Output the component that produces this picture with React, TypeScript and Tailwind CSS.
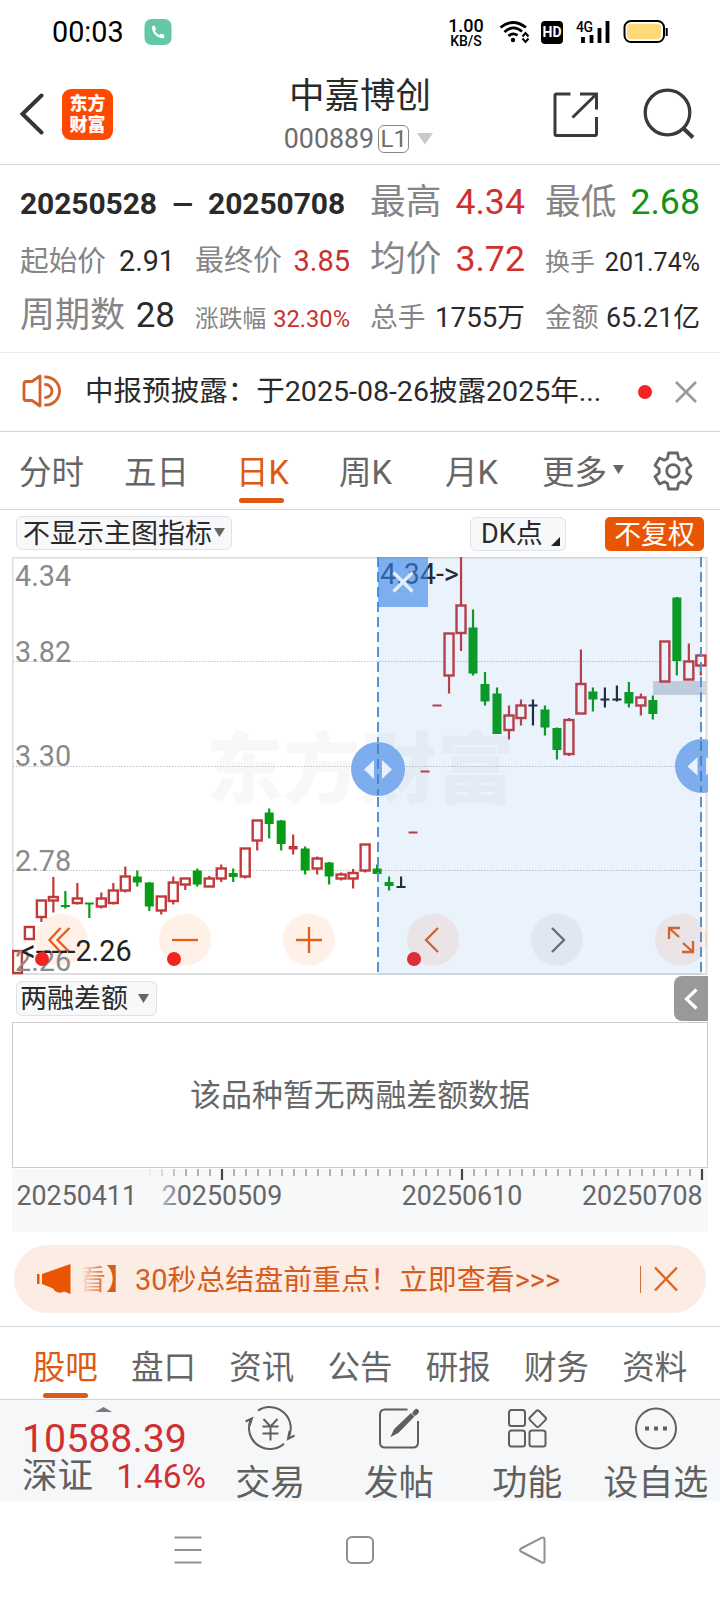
import { ReactNode } from 'react';
import clsx from 'clsx';

const ORANGE = '#e2601c';
const RED = '#c4383a';
const GREEN = '#079c16';
const DARK = '#1f2533';

type Kind = 'up' | 'down' | 'flat';
// [kind, high, bodyTop, bodyBottom, low]
type Candle = [Kind, number, number, number, number];

const candles: Candle[] = [
  ['up', 950, 950, 974, 974],
  ['up', 926, 926, 940, 940],
  ['up', 899.5, 899.5, 918, 922],
  ['up', 877, 896, 901.5, 912.5],
  ['down', 891, 905, 907, 908.5],
  ['up', 883, 897.5, 904, 904.5],
  ['down', 902.5, 902.5, 904.5, 918],
  ['up', 892.5, 897.5, 907.5, 908.5],
  ['up', 883, 889.5, 904, 904.5],
  ['up', 866.5, 875.5, 891.5, 892.5],
  ['down', 870.5, 876.5, 882.5, 886.5],
  ['down', 882, 882.5, 906.5, 911],
  ['up', 895.5, 895.5, 911.5, 914.5],
  ['up', 876.5, 881.5, 902, 904.5],
  ['up', 877.5, 877.5, 885.5, 890],
  ['down', 868.5, 870.5, 884.5, 886.5],
  ['up', 876, 877.5, 887.5, 887.5],
  ['up', 864.5, 867.5, 879.5, 882],
  ['down', 868.5, 873, 877, 882],
  ['up', 847.5, 847.5, 877.5, 878.5],
  ['up', 819.5, 819.5, 841.5, 850.5],
  ['down', 808.5, 812.5, 824, 838.5],
  ['down', 820, 820.5, 844, 850.5],
  ['up', 834.5, 846, 849.5, 854.5],
  ['down', 846.5, 848.5, 870.5, 874.5],
  ['up', 856.5, 857.5, 869.5, 874.5],
  ['down', 862, 862.5, 876.5, 884.5],
  ['up', 872.5, 873.5, 879.5, 880.5],
  ['up', 869, 872, 879.5, 888.5],
  ['up', 843.5, 843.5, 871.5, 872.5],
  ['down', 864.5, 868.5, 874, 874],
  ['down', 876.5, 882, 886, 890.5],
  ['flat', 876.5, 886, 888, 888],
  ['up', 831.5, 831.5, 833.5, 833.5],
  ['up', 770.5, 770.5, 772.5, 772.5],
  ['up', 704.5, 704.5, 706.5, 706.5],
  ['up', 632.5, 632.5, 676.5, 693.5],
  ['up', 557, 604.5, 634, 651],
  ['down', 609.5, 627.5, 673.5, 675.5],
  ['down', 672, 684, 701.5, 705.5],
  ['down', 687.5, 693.5, 734, 734],
  ['up', 705.5, 714.5, 731, 739.5],
  ['up', 699.5, 704.5, 719, 725.5],
  ['flat', 699.5, 704.5, 706.5, 725.5],
  ['down', 705.5, 709.5, 727.5, 735.5],
  ['down', 727.5, 728, 750, 759.5],
  ['up', 718, 719, 755, 756],
  ['up', 649.5, 683, 714.5, 714.5],
  ['down', 687.5, 691.5, 699.5, 711.5],
  ['flat', 687.5, 698.5, 700.5, 707.5],
  ['flat', 685.5, 698.5, 700.5, 701.5],
  ['down', 682, 692, 703.5, 707.5],
  ['up', 693.5, 696.5, 706.5, 715.5],
  ['down', 695.5, 700, 714, 719.5],
  ['up', 640.5, 640.5, 682.5, 682.5],
  ['down', 597, 597.5, 661, 675.5],
  ['up', 643.5, 660.5, 680.5, 680.5],
  ['up', 652, 654.5, 666.5, 675.5],
];

const periods = ['20250411', '20250509', '20250610', '20250708'];
const bottomTabs = ['股吧', '盘口', '资讯', '公告', '研报', '财务', '资料'];

export default function App() {
  return (
    <div className="w-[720px] h-[1600px] overflow-hidden bg-white text-[#2a2a2a] font-['Roboto','Noto_Sans_CJK_SC',sans-serif]">
      <StatusBar />
      <Header />
      <Stats />
      <Notice />
      <PeriodTabs />
      <ChartToolbar />
      <CandleChart />
      <Indicator />
      <TimeAxis />
      <Banner />
      <BottomTabs />
      <BottomBar />
      <SystemNav />
    </div>
  );
}

function StatusBar() {
  return (
    <div className="flex h-[62px] items-center pl-[52px] pr-[51px] pt-[2px] text-black">
      <span className="text-[28.800px] leading-none">00:03</span>
      <svg className="ml-[20px]" width="28" height="28" viewBox="0 0 28 28">
        <rect x="0.5" y="1" width="27" height="26" rx="7" fill="#64c8a7" />
        <path d="M8 8.300 10.600 7.600 12.200 11.200 10.800 12.600C11.700 14.600 13.200 16.200 15.300 17L16.800 15.600 20.400 17.100 20 20.200C13.500 20.700 7.600 15.200 8 8.300Z" fill="#fff" />
      </svg>
      <div className="ml-auto flex items-center">
        <div className="flex w-[36px] flex-col items-center font-medium">
          <span className="text-[18px] leading-[17px]">1.00</span>
          <span className="text-[14px] leading-[14px]">KB/S</span>
        </div>
        <svg className="ml-[15px]" width="32" height="26" viewBox="0 0 32 26" fill="none" stroke="#000" strokeWidth="2.800">
          <path d="M1.500 8.500Q14 -1.500 27 8.500M5.500 13Q14 5 23 12.500M9.500 17Q14 13 18.500 16.500" />
          <circle cx="14" cy="21" r="2.200" fill="#000" stroke="none" />
          <path d="M23.500 17.500 26.500 14 29.500 17.500M23.500 19.500 26.500 23 29.500 19.500" strokeWidth="2" />
        </svg>
        <span className="ml-[10px] flex h-[23px] w-[22px] items-center justify-center rounded-[4px] bg-black text-[14px] font-bold leading-none text-white">HD</span>
        <svg className="ml-[13px]" width="34" height="26" viewBox="0 0 34 26">
          <text x="0" y="12.500" fontSize="14" fontWeight="500" textLength="17">4G</text>
          <path d="M7 18v6M15.500 16v8M23.500 9v15M31.500 2v22" stroke="#000" strokeWidth="3.800" />
        </svg>
        <svg className="ml-[13px]" width="46" height="26" viewBox="0 0 46 26">
          <rect x="1.500" y="2" width="39.500" height="21" rx="6.500" fill="#fff" stroke="#000" strokeWidth="2" />
          <rect x="4" y="4.800" width="34" height="15.500" rx="4" fill="#fdd978" />
          <path d="M43.700 9v8" stroke="#000" strokeWidth="2" />
        </svg>
      </div>
    </div>
  );
}

function Header() {
  return (
    <header className="grid h-[103px] grid-cols-[1fr_auto_1fr] items-center border-b border-[#d5d5d5]">
      <div className="flex items-center pl-[19px] pt-[2px]">
        <svg width="26" height="42" viewBox="0 0 26 42" fill="none" stroke="#353535" strokeWidth="4" strokeLinecap="round">
          <path d="M22.500 2.500 3.500 21 22.500 39.500" />
        </svg>
        <div className="ml-[17px] flex h-[51px] w-[51px] flex-col items-center justify-center rounded-[9px] bg-[#ff4800] text-[18px] font-black leading-[21px] text-white">
          <span>东方</span>
          <span>财富</span>
        </div>
      </div>
      <div className="flex flex-col items-center pt-[3px]">
        <h1 className="text-[35.500px] leading-[42px]">中嘉博创</h1>
        <div className="mt-[7px] flex items-center pr-[3px] text-[26.800px] leading-[30px] text-[#6d6d6d]">
          000889
          <span className="ml-[4px] flex h-[28px] w-[31px] items-center justify-center rounded-[6px] border border-[#888] text-[24px]">L1</span>
          <svg className="ml-[8px]" width="16" height="12" viewBox="0 0 16 12"><path d="M0 0h16L8 11.500Z" fill="#c9c9c9" /></svg>
        </div>
      </div>
      <div className="flex items-center justify-end pr-[24px] pt-[1px]">
        <svg width="48" height="48" viewBox="0 0 48 48" fill="none" stroke="#3a3a3a" strokeWidth="3">
          <path d="M19.500 4H5.500Q4 4 4 5.500V44Q4 45.500 5.500 45.500H44Q45.500 45.500 45.500 44V27M29 4H45.500V19.500M45 4.500 21.500 27.500" />
        </svg>
        <svg className="ml-[43px]" width="54" height="54" viewBox="0 0 54 54" fill="none" stroke="#3a3a3a" strokeWidth="3.300">
          <circle cx="25.500" cy="25.500" r="22.300" />
          <path d="M41 41 51 50.500" strokeWidth="4" />
        </svg>
      </div>
    </header>
  );
}

interface StatProps {
  label: string;
  value: string;
  size: string;
  color?: string;
}

function Stat({ label, value, size, color }: StatProps) {
  return (
    <div className={clsx('flex items-baseline justify-between whitespace-nowrap', size)}>
      <span className="text-[#858585]">{label}</span>
      <span className={color}>{value}</span>
    </div>
  );
}

function Stats() {
  return (
    <section className="grid h-[188px] grid-cols-[155px_155px_155px_155px] grid-rows-[57px_57px_57px] items-baseline gap-x-[20px] border-b border-[#ececec] pl-[20px] pt-[11px] leading-[52px]">
      <div className="col-span-2 flex items-baseline justify-between pb-[3px] pr-[5px] text-[30px] font-bold leading-[49px] tracking-[-0.1px]">
        <span>20250528</span>
        <span className="text-[27px]">—</span>
        <span>20250708</span>
      </div>
      <Stat label="最高" value="4.34" size="text-[35.700px]" color="text-[#d0312f]" />
      <Stat label="最低" value="2.68" size="text-[35.700px]" color="text-[#119415]" />
      <Stat label="起始价" value="2.91" size="text-[28.700px]" />
      <Stat label="最终价" value="3.85" size="text-[29px]" color="text-[#c9302f]" />
      <Stat label="均价" value="3.72" size="text-[35.700px]" color="text-[#d0312f]" />
      <Stat label="换手" value="201.74%" size="text-[25px]" />
      <Stat label="周期数" value="28" size="text-[35px]" />
      <Stat label="涨跌幅" value="32.30%" size="text-[23.700px]" color="text-[#c9302f]" />
      <Stat label="总手" value="1755万" size="text-[27.700px]" />
      <Stat label="金额" value="65.21亿" size="text-[26.800px]" />
    </section>
  );
}

function Notice() {
  return (
    <div className="flex h-[79px] items-center border-b border-[#d5d5d5] pl-[22px]">
      <svg className="mb-[2px]" width="40" height="34" viewBox="0 0 40 34" fill="none" stroke="#d2622c" strokeWidth="2.800" strokeLinejoin="round" strokeLinecap="round">
        <path d="M18 2 10 7.500H4Q2 7.500 2 10V24Q2 26.500 4 26.500H10L18 32Z" />
        <path d="M23.500 10.500A6.500 6.500 0 0 1 23.500 23.500M23.500 3A14 14 0 0 1 23.500 31" />
      </svg>
      <span className="ml-[23px] whitespace-nowrap text-[28.550px]">中报预披露：于2025-08-26披露2025年...</span>
      <span className="ml-auto h-[14px] w-[14px] rounded-full bg-[#f22323]" />
      <svg className="ml-[22px] mr-[22px]" width="24" height="24" viewBox="0 0 24 24" stroke="#999" strokeWidth="2.600">
        <path d="M2 2 22 22M22 2 2 22" />
      </svg>
    </div>
  );
}

function PeriodTabs() {
  return (
    <nav className="flex h-[78px] items-center border-b border-[#d5d5d5] pl-[19px] pt-[4px] text-[32.500px] leading-[48px] text-[#666]">
      <span className="w-[105px]">分时</span>
      <span className="w-[112px]">五日</span>
      <span className="relative w-[103px] text-[#dc5a14]">
        日K
        <span className="absolute -bottom-[6px] left-[3px] h-[5px] w-[45px] rounded-full bg-[#dc5a14]" />
      </span>
      <span className="w-[106px]">周K</span>
      <span className="w-[97px]">月K</span>
      <span>更多</span>
      <svg className="ml-[6px] mb-[6px]" width="11" height="9" viewBox="0 0 11 9"><path d="M0 0h11L5.500 9Z" fill="#666" /></svg>
      <svg className="ml-[28px] mb-[4px]" width="42" height="42" viewBox="-21 -21 42 42" fill="none" stroke="#666" strokeWidth="2.800" strokeLinejoin="round">
        <path d="M-4.500 -18H4.500L5.500 -12.500 8.500 -10.800 13.500 -13 18 -5.500 13.800 -2V2L18 5.500 13.500 13 8.500 10.800 5.500 12.500 4.500 18H-4.500L-5.500 12.500 -8.500 10.800 -13.500 13 -18 5.500 -13.800 2V-2L-18 -5.500 -13.500 -13 -8.500 -10.800 -5.500 -12.500Z" />
        <circle r="6.300" />
      </svg>
    </nav>
  );
}

function ChartToolbar() {
  return (
    <div className="flex h-[47px] items-start pl-[16px] pr-[16px] pt-[6px] text-[27px] leading-[32px]">
      <div className="flex h-[34px] w-[216px] items-center justify-between whitespace-nowrap rounded-[6px] border border-[#e0e2e8] bg-[#f7f8fa] pl-[6px] pr-[6px] pt-px text-[27px]">
        不显示主图指标
        <svg className="mb-[3px]" width="11" height="9" viewBox="0 0 11 9"><path d="M0 0h11L5.500 9Z" fill="#666" /></svg>
      </div>
      <div className="ml-auto mt-px flex h-[34px] w-[96px] items-center justify-between rounded-[6px] border border-[#e0e2e8] bg-[#f7f8fa] pl-[10px] pr-[5px]">
        DK点
        <svg className="mt-[14px]" width="9" height="9" viewBox="0 0 9 9"><path d="M9 0V9H0Z" fill="#222" /></svg>
      </div>
      <div className="ml-[39px] mt-px flex h-[34px] w-[99px] items-center justify-center rounded-[5px] bg-[#e95504] pt-px text-[26.800px] text-white">不复权</div>
    </div>
  );
}

function CandleShape({ index, candle }: { index: number; candle: Candle }) {
  const [kind, high, top, bottom, low] = candle;
  const x = 17.4 + index * 11.99;
  const color = kind === 'up' ? RED : kind === 'down' ? GREEN : DARK;
  const hollow = kind === 'up' && bottom - top > 4;
  return (
    <g>
      {high < top && <path d={`M${x} ${high}V${top + 1}`} stroke={color} strokeWidth="2.200" />}
      {low > bottom && <path d={`M${x} ${bottom - 1}V${low}`} stroke={color} strokeWidth="2.200" />}
      {hollow ? (
        <rect x={x - 4.5} y={top + 1} width="9" height={bottom - top - 2} fill="#fff" stroke={color} strokeWidth="2.400" />
      ) : (
        <rect x={x - 4.5} y={top} width="9" height={bottom - top} fill={color} />
      )}
    </g>
  );
}

function RoundButton({ x, gray, children }: { x: number; gray?: boolean; children: ReactNode }) {
  return (
    <g>
      <circle cx={x} cy="939.700" r="26" fill={gray ? '#88898b' : '#ff6b1a'} fillOpacity="0.1" />
      <g transform={`translate(${x} 940)`} fill="none" stroke={gray ? '#6b6b6b' : ORANGE} strokeWidth="2.300">{children}</g>
    </g>
  );
}

function CandleChart() {
  return (
    <svg className="ml-[12px] block" width="696" height="418" viewBox="12 557 696 418">
      <path d="M12.500 975V557.500H706.500V974H12" fill="none" stroke="#dedede" strokeWidth="2" />
      <text x="206" y="797" fontSize="77" fontWeight="900" fill="#f8f8f8">东方财富</text>
      {[661.5, 766.5, 870.5].map(y => (
        <path key={y} d={`M13 ${y}H708`} stroke="#c4c4c4" strokeWidth="1" strokeDasharray="1.500 1.500" />
      ))}
      <g fontSize="28.800" fill="#8a8a8a">
        <text x="15" y="585.500">4.34</text>
        <text x="15" y="662">3.82</text>
        <text x="15" y="766">3.30</text>
        <text x="15" y="870.500">2.78</text>
      </g>
      <rect x="653" y="681" width="54" height="14" fill="#d0d5de" />
      {candles.map((c, i) => <CandleShape key={i} index={i} candle={c} />)}
      <text x="380" y="583.500" fontSize="28.700" fill="#222">4.34-&gt;</text>

      <RoundButton x={61.5}>
        <path d="M-1 -12 -12 0 -1 12M8 -12 -4 0 8 12" />
      </RoundButton>
      <RoundButton x={185}><path d="M-13 0H13" /></RoundButton>
      <RoundButton x={309}><path d="M-13 0H13M0 -13V13" /></RoundButton>
      <RoundButton x={433}><path d="M5 -12 -7 0 5 12" /></RoundButton>
      <RoundButton x={557} gray><path d="M-5 -12 7 0 -5 12" /></RoundButton>
      <RoundButton x={681}>
        <path d="M-12 -1V-12H-1M-12 -12 -2 -3M12 1V12H1M12 12 2 3" />
      </RoundButton>
      <text x="15" y="970.500" fontSize="28.800" fill="#8a8a8a">2.26</text>
      <text x="21" y="961" fontSize="28.800" fill="#222">&lt;-----2.26</text>
      {[42, 174, 414].map(x => <circle key={x} cx={x} cy="959" r="7" fill="#f02522" />)}

      {/* selected range */}
      <rect x="378" y="557" width="324" height="418" fill="#2f80dc" fillOpacity="0.1" />
      <path d="M378 557V975M701 557V975" stroke="#5b92cd" strokeWidth="2" strokeDasharray="10 5" />
      <rect x="378" y="557" width="50" height="50" fill="#3a86e6" fillOpacity="0.620" />
      <path d="M393.500 572.500 412.500 591.500M412.500 572.500 393.500 591.500" stroke="#e3eefc" strokeWidth="3.200" />
      <circle cx="378" cy="769" r="27" fill="#7dadec" />
      <path d="M378 744V795" stroke="#4a87c8" strokeWidth="2" strokeDasharray="10 5" />
      <path d="M374 760V779L364 769.500ZM382 760V779L392 769.500Z" fill="#e8f1fc" />
      <circle cx="702" cy="766" r="27" fill="#7dadec" />
      <path d="M701 741V792" stroke="#4a87c8" strokeWidth="2" strokeDasharray="10 5" />
      <path d="M697.500 757V775.500L687.500 766.500ZM706 757V775.500L716 766.500Z" fill="#e8f1fc" />
    </svg>
  );
}

function Indicator() {
  return (
    <section className="px-[12px]">
      <div className="flex h-[47px] justify-between">
        <div className="ml-[4px] mt-[6px] flex h-[35px] w-[141px] items-center justify-between rounded-[6px] border border-[#e0e2e8] bg-[#f7f8fa] pl-[3px] pr-[7px] text-[27px] leading-[32px]">
          两融差额
          <svg width="11" height="9" viewBox="0 0 11 9"><path d="M0 0h11L5.500 9Z" fill="#666" /></svg>
        </div>
        <div className="mt-px flex h-[45px] w-[34px] items-center justify-center rounded-l-[8px] bg-[#999]">
          <svg width="14" height="22" viewBox="0 0 14 22" fill="none" stroke="#fff" strokeWidth="3.200">
            <path d="M12.500 1.500 2.500 11 12.500 20.500" />
          </svg>
        </div>
      </div>
      <div className="flex h-[146px] items-center justify-center border border-[#ccc] pt-[3px] text-[30.900px] text-[#666]">该品种暂无两融差额数据</div>
    </section>
  );
}

function TimeAxis() {
  const ticks = Array.from({ length: 47 }, (_, i) => 150 + i * 12);
  return (
    <svg className="ml-[12px] mt-px block" width="696" height="63" viewBox="12 1169 696 63">
      <defs>
        <linearGradient id="axisFade">
          <stop offset="0.200" stopColor="#f7f8fa" />
          <stop offset="1" stopColor="#f7f8fa" stopOpacity="0" />
        </linearGradient>
      </defs>
      <rect x="12" y="1169" width="696" height="63" fill="#f7f8fa" />
      {ticks.map(x =>
        (x - 222) % 240 === 0
          ? <path key={x} d={`M${x} 1169v11`} stroke="#444" strokeWidth="2.200" />
          : <path key={x} d={`M${x} 1169v7`} stroke="#999" strokeWidth="1.500" />
      )}
      <g fontSize="26.800" fill="#666">
        <text x="222" y="1204.500" textAnchor="middle">{periods[1]}</text>
        <text x="462" y="1204.500" textAnchor="middle">{periods[2]}</text>
        <text x="702.500" y="1204.500" textAnchor="end">{periods[3]}</text>
        <rect x="134" y="1169" width="50" height="63" fill="url(#axisFade)" />
        <text x="16.500" y="1204.500">{periods[0]}</text>
      </g>
    </svg>
  );
}

function Banner() {
  return (
    <div className="mx-[14px] mt-[13px] flex h-[68px] items-center rounded-full bg-[#fcede4] pl-[22px] pr-[28px] text-[#d65c1d]">
      <svg width="36" height="30" viewBox="0 0 36 30" fill="#ea5504">
        <path d="M1 10h2.500v10H1ZM6 10 34.500 0V30L28 27.500Q24 30 19 27L17 24.500 6 20Z" />
      </svg>
      <div className="ml-[11px] flex w-[500px] justify-start overflow-hidden whitespace-nowrap pt-[2px] text-[28.950px] leading-[42px]">
        <span className="-ml-[6px] bg-linear-to-r from-[#fdede4] from-10% to-[#d65c1d] to-100% bg-clip-text text-transparent">看</span>
        <span>】30秒总结盘前重点！立即查看&gt;&gt;&gt;</span>
      </div>
      <span className="ml-auto h-[27px] w-px bg-[#d0703a]" />
      <svg className="ml-[13px]" width="24" height="26" viewBox="0 0 24 26" stroke="#df6527" strokeWidth="2.400">
        <path d="M1 1.500 23 24.500M23 1.500 1 24.500" />
      </svg>
    </div>
  );
}

function BottomTabs() {
  return (
    <nav className="mt-[13px] grid h-[74px] grid-cols-7 border-y border-[#d5d5d5] px-[16px] text-[32.500px] text-[#666]">
      {bottomTabs.map((tab, i) => (
        <div key={tab} className={clsx('relative text-center leading-[82px]', i === 0 && 'text-[#dc5a14]')}>
          {tab}
          {i === 0 && <span className="absolute left-[27px] top-[66px] h-[5px] w-[45px] rounded-full bg-[#dc5a14]" />}
        </div>
      ))}
    </nav>
  );
}

function Action({ label, children }: { label: string; children: ReactNode }) {
  return (
    <div className="flex w-[128.500px] shrink-0 flex-col items-center pt-[6px]">
      <svg className="shrink-0" width="52" height="46" viewBox="0 0 52 46" fill="none" stroke="#5f5f5f" strokeWidth="2">{children}</svg>
      <span className="mt-[14px] whitespace-nowrap text-[35px] leading-[36px]">{label}</span>
    </div>
  );
}

function BottomBar() {
  return (
    <div className="flex h-[101px] overflow-hidden bg-[#f6f7f9] text-[#606060]">
      <div className="w-[206px] shrink-0 pl-[22px] pt-[7px] text-[#d0302f]">
        <svg className="ml-[73px] block" width="17" height="5" viewBox="0 0 17 5"><path d="M0 5 8.500 0 17 5Z" fill="#77797d" /></svg>
        <div className="mt-[7px] text-[39.300px] leading-[40px]">10588.39</div>
        <div className="-mt-px flex items-baseline justify-between whitespace-nowrap text-[33.500px] leading-[36px]">
          <span className="text-[35.500px] text-[#606060]">深证</span>
          <span>1.46%</span>
        </div>
      </div>
      <Action label="交易">
        <path d="M14 4.700A21 21 0 0 1 44 32.500M40 37.700A21 21 0 0 1 6.600 14M1.500 15.500 8 12.500 5.500 20M50.500 29.500 44 33 45.500 25" />
        <path d="M19.500 13 26.500 20.500 33.500 13M18.500 20.500H34.500M18.500 27.500H34.500M26.500 20V34.500" />
      </Action>
      <Action label="发帖">
        <path d="M34.500 3.500H12Q7 3.500 7 8.500V36.500Q7 41.500 12 41.500H40Q45 41.500 45 36.500V15" />
        <path d="M19.500 29 22 23.500 38 8.500 40 10.500 25 26Z" fill="#5f5f5f" />
        <path d="M42 7 43.500 5.500" strokeWidth="5" strokeLinecap="round" />
      </Action>
      <Action label="功能">
        <rect x="8" y="4" width="16" height="16" rx="2.500" />
        <rect x="8" y="24.500" width="16" height="16" rx="2.500" />
        <rect x="28.500" y="24.500" width="16" height="16" rx="2.500" />
        <rect x="30.300" y="6.300" width="12.800" height="12.800" rx="2" transform="rotate(45 36.700 12.700)" />
      </Action>
      <Action label="设自选">
        <circle cx="26" cy="22.500" r="20" />
        <path d="M17 20.500v4M26 20.500v4M35 20.500v4" strokeWidth="4" />
      </Action>
    </div>
  );
}

function SystemNav() {
  return (
    <div className="flex h-[98px] items-center justify-center gap-[144px]">
      <svg width="28" height="28" viewBox="0 0 28 28" stroke="#8f8f8f" strokeWidth="2"><path d="M.5 1.500h27M.5 14h27M.5 26.500h27" /></svg>
      <svg width="28" height="28" viewBox="0 0 28 28" fill="none" stroke="#8f8f8f" strokeWidth="2"><rect x="1" y="1" width="26" height="26" rx="5" /></svg>
      <svg width="28" height="28" viewBox="0 0 28 28" fill="none" stroke="#8f8f8f" strokeWidth="2" strokeLinejoin="round">
        <path d="M3 12.500 24 1.700Q26.500 1 26.500 3.500V25Q26.500 27.500 24 26.500L3 15.500Q1 14 3 12.500Z" />
      </svg>
    </div>
  );
}
